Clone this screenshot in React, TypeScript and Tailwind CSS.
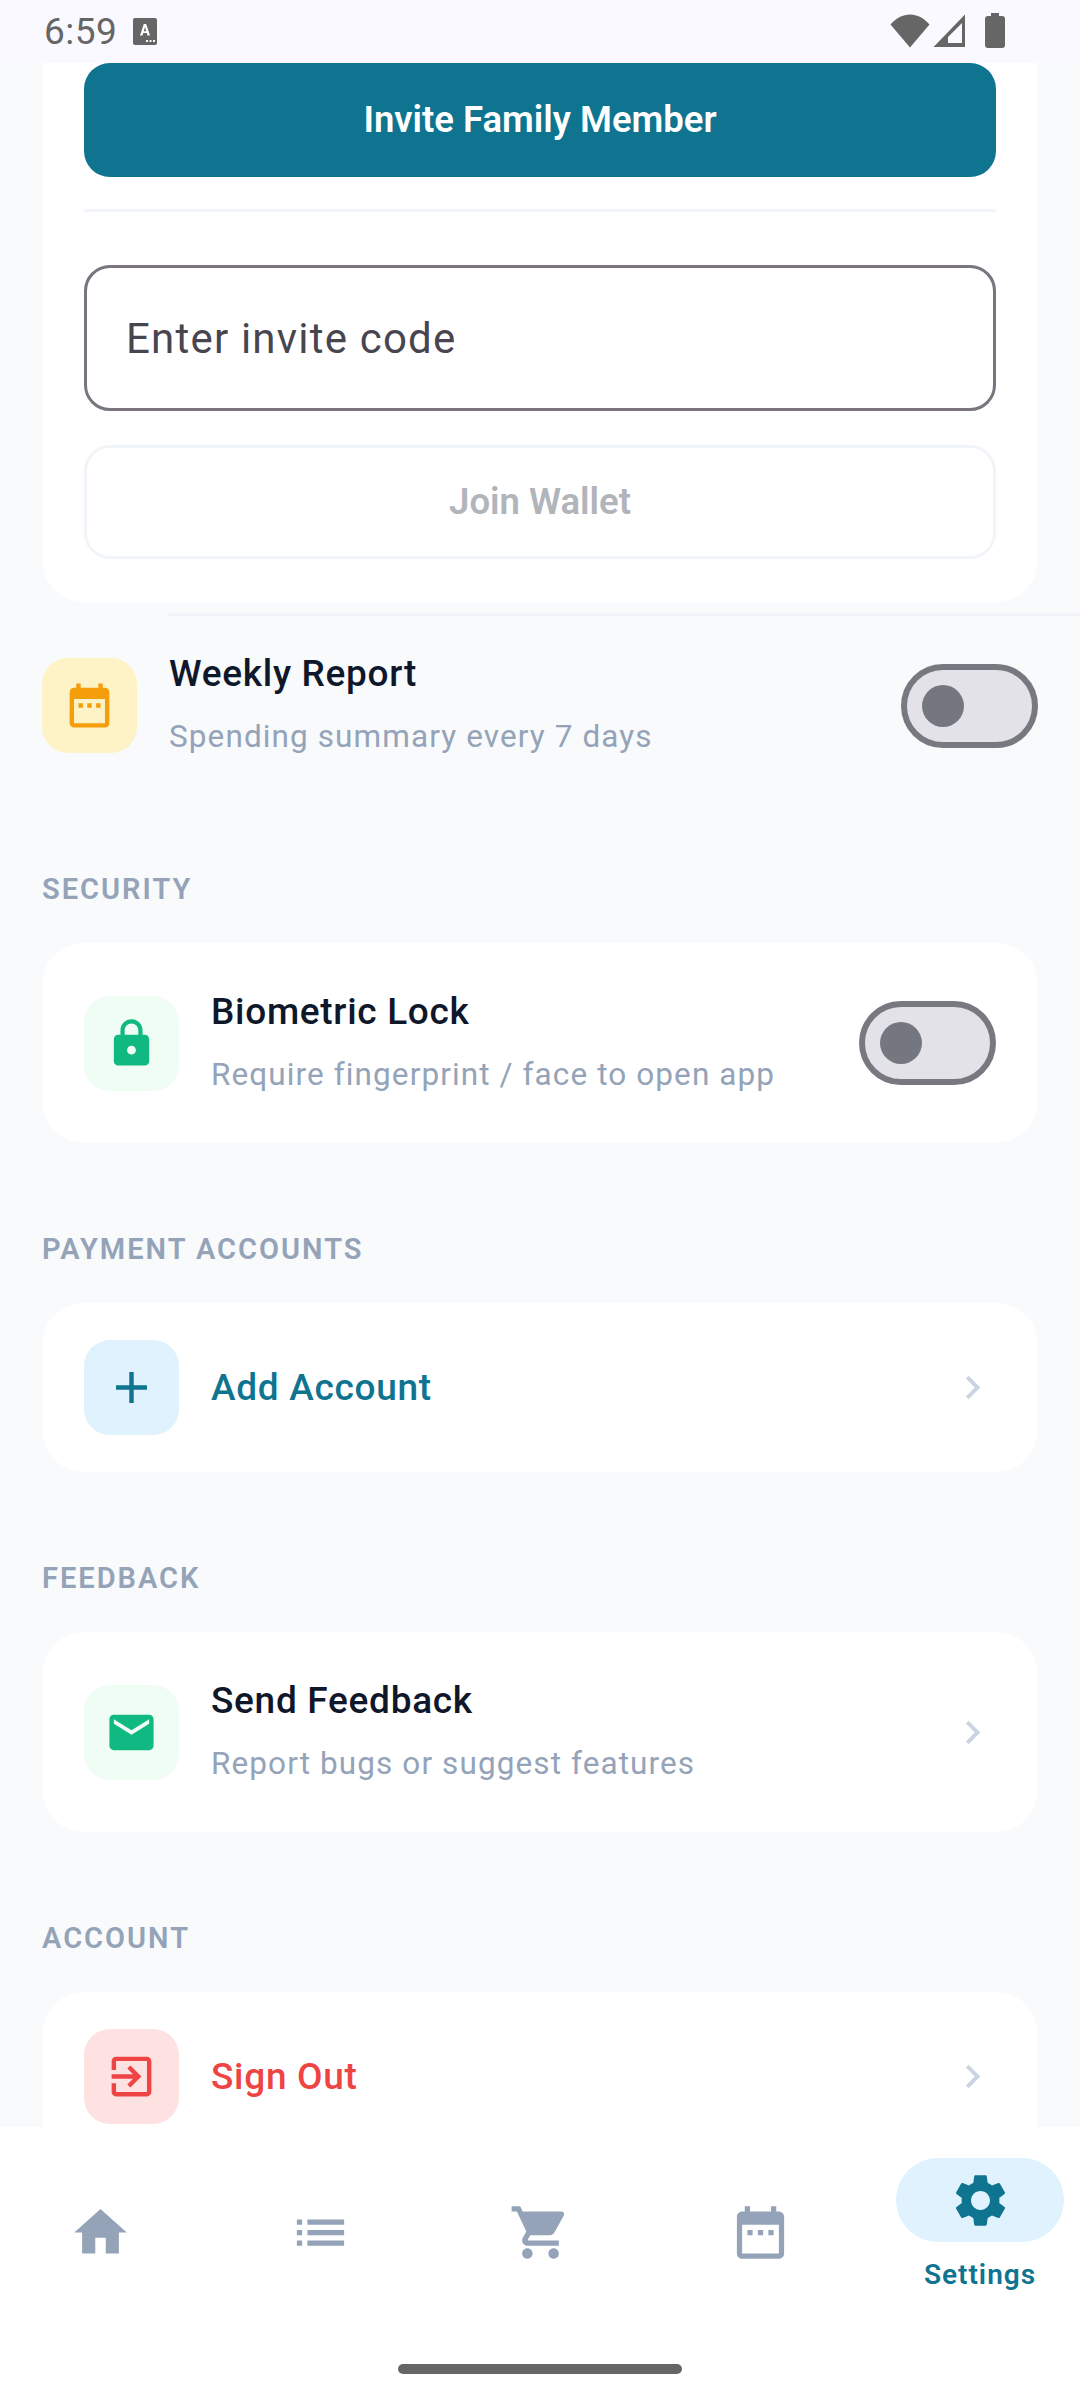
import type { ReactNode } from 'react';
import {
  MdAdd,
  MdChevronRight,
  MdDateRange,
  MdEmail,
  MdExitToApp,
  MdHome,
  MdList,
  MdLock,
  MdSettings,
  MdShoppingCart,
} from 'react-icons/md';

function StatusBar() {
  return (
    <div className="relative z-10 flex h-[63px] shrink-0 items-center justify-between bg-[#f9f9ff] pl-[44px] pr-[75px] text-[#666666]">
      <div className="flex items-center gap-[16px]">
        <span className="text-[37px] leading-none tracking-[0.5px]">6:59</span>
        <svg width="24" height="27" viewBox="0 0 24 27">
          <rect width="24" height="27" rx="2" fill="#666666" />
          <path d="M7 17.5 10.8 6h2.4L17 17.5h-2.5l-.7-2.4h-3.6l-.7 2.4zm3.8-4.3h2.4L12 9z" fill="#fff" />
          <rect x="13" y="22" width="2" height="2" fill="#fff" />
          <rect x="16.5" y="22" width="2" height="2" fill="#fff" />
          <rect x="20" y="22" width="2" height="2" fill="#fff" />
        </svg>
      </div>
      <div className="-mt-[2px] flex items-center">
        <svg width="40" height="34" viewBox="0 0 40 34">
          <path d="M20 33.5.5 10.5C6 4 13 .5 20 .5s14 3.500 19.500 10z" fill="#666666" />
        </svg>
        <svg width="33" height="34" viewBox="0 0 33 34" className="ml-[3px]">
          <path fillRule="evenodd" d="M32 .5V33H.5zM29 9 15 23v6h14z" fill="#666666" />
        </svg>
        <svg width="20" height="35" viewBox="0 0 20 35" className="ml-[19px]">
          <path d="M6 0h8v3h3a3 3 0 0 1 3 3v26a3 3 0 0 1-3 3H3a3 3 0 0 1-3-3V6a3 3 0 0 1 3-3h3z" fill="#666666" />
        </svg>
      </div>
    </div>
  );
}

function IconTile({ bg, children }: { bg: string; children: ReactNode }) {
  return <div className={`flex h-[95px] w-[95px] shrink-0 items-center justify-center rounded-[26px] ${bg}`}>{children}</div>;
}

function RowText({ title, sub }: { title: string; sub: string }) {
  return (
    <div className="flex min-w-0 flex-1 flex-col gap-[21px]">
      <div className="text-[37px] leading-[42px] font-[480] tracking-[0.7px] text-[#0f172a]">{title}</div>
      <div className="text-[31.500px] leading-[42px] tracking-[1.1px] text-[#94a3b8]">{sub}</div>
    </div>
  );
}

function Toggle() {
  return (
    <div className="flex h-[84px] w-[137px] shrink-0 items-center rounded-full border-[6px] border-[#777880] bg-[#e2e2e8] pl-[15px]">
      <div className="h-[42px] w-[42px] rounded-full bg-[#74777f]" />
    </div>
  );
}

function SectionLabel({ children, top }: { children: string; top: string }) {
  return <div className={`${top} mb-[44px] pl-[42px] text-[29px] leading-[20px] font-semibold tracking-[2px] text-[#94a3b8]`}>{children}</div>;
}

function Chevron() {
  return <MdChevronRight size={47} className="shrink-0 text-[#cbd5e1]" />;
}

function NavItem({ children }: { children: ReactNode }) {
  return <div className="flex w-[168px] justify-center pt-[74px]">{children}</div>;
}

export default function App() {
  return (
    <div className="flex h-[2400px] w-[1080px] flex-col overflow-hidden bg-[#f8fafc] font-['Roboto',sans-serif]">
      <StatusBar />

      <main className="min-h-0 flex-1 overflow-hidden">
        {/* card scrolled under the status bar */}
        <section className="mx-[42px] rounded-b-[42px] bg-white px-[42px] pb-[43px]">
          <button className="flex h-[114px] w-full items-center justify-center rounded-[26px] bg-[#0e7490] text-[36.500px] font-semibold text-white">
            Invite Family Member
          </button>
          <div className="mt-[32px] h-[3px] bg-[#f1f5f9]" />
          <input
            placeholder="Enter invite code"
            className="mt-[53px] h-[146px] w-full rounded-[26px] border-[3px] border-[#79747e] px-[39px] text-[42px] tracking-[1.2px] placeholder:text-[#49454f]"
          />
          <button className="mt-[34px] flex h-[114px] w-full items-center justify-center rounded-[26px] border-[3px] border-[#f1f5f9] bg-white text-[36.500px] font-semibold text-[#b1b5bb]">
            Join Wallet
          </button>
        </section>

        <div className="mt-[11px] ml-[168px] h-[3px] bg-[#f1f5f9]" />

        <div className="flex items-center gap-[32px] px-[42px] pt-[37px]">
          <IconTile bg="bg-[#fef3c7]">
            <MdDateRange size={53} className="text-[#f59e0b]" />
          </IconTile>
          <RowText title="Weekly Report" sub="Spending summary every 7 days" />
          <Toggle />
        </div>

        <SectionLabel top="mt-[121px]">SECURITY</SectionLabel>
        <div className="mx-[42px] flex h-[200px] items-center gap-[32px] rounded-[42px] bg-white px-[42px]">
          <IconTile bg="bg-[#f0fdf4]">
            <MdLock size={53} className="text-[#10b981]" />
          </IconTile>
          <RowText title="Biometric Lock" sub="Require fingerprint / face to open app" />
          <Toggle />
        </div>

        <SectionLabel top="mt-[96px]">PAYMENT ACCOUNTS</SectionLabel>
        <div className="mx-[42px] flex h-[169px] items-center gap-[32px] rounded-[42px] bg-white px-[42px]">
          <IconTile bg="bg-[#e0f2fe]">
            <MdAdd size={53} className="text-[#0e7490]" />
          </IconTile>
          <div className="flex-1 text-[37px] font-[480] tracking-[0.7px] text-[#0e7490]">Add Account</div>
          <Chevron />
        </div>

        <SectionLabel top="mt-[96px]">FEEDBACK</SectionLabel>
        <div className="mx-[42px] flex h-[200px] items-center gap-[32px] rounded-[42px] bg-white px-[42px]">
          <IconTile bg="bg-[#f0fdf4]">
            <MdEmail size={53} className="text-[#10b981]" />
          </IconTile>
          <RowText title="Send Feedback" sub="Report bugs or suggest features" />
          <Chevron />
        </div>

        <SectionLabel top="mt-[96px]">ACCOUNT</SectionLabel>
        <div className="mx-[42px] flex h-[169px] items-center gap-[32px] rounded-[42px] bg-white px-[42px]">
          <IconTile bg="bg-[#fee2e2]">
            <MdExitToApp size={53} className="text-[#ef4444]" />
          </IconTile>
          <div className="flex-1 text-[37px] font-[480] tracking-[0.7px] text-[#ef4444]">Sign Out</div>
          <Chevron />
        </div>
      </main>

      <nav className="relative flex h-[273px] shrink-0 justify-between bg-white px-[16px]">
        <NavItem>
          <MdHome size={63} className="text-[#94a3b8]" />
        </NavItem>
        <NavItem>
          <MdList size={63} className="text-[#94a3b8]" />
        </NavItem>
        <NavItem>
          <MdShoppingCart size={63} className="text-[#94a3b8]" />
        </NavItem>
        <NavItem>
          <MdDateRange size={63} className="text-[#94a3b8]" />
        </NavItem>
        <div className="flex w-[168px] flex-col items-center pt-[31px]">
          <div className="flex h-[84px] w-[168px] items-center justify-center rounded-full bg-[#e0f2fe]">
            <MdSettings size={63} className="text-[#0e7490]" />
          </div>
          <div className="mt-[14px] text-[28px] leading-[38px] font-semibold tracking-[1px] text-[#0e7490]">Settings</div>
        </div>
        <div className="absolute bottom-[26px] left-[398px] h-[10px] w-[284px] rounded-full bg-[#666666]" />
      </nav>
    </div>
  );
}
